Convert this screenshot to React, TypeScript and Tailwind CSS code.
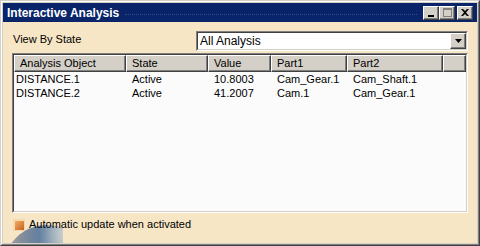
import React from "react";

const font = { fontFamily: '"Liberation Sans", Arial, sans-serif' };

function CapBtn({ children }: { children: React.ReactNode }) {
  return (
    <div className="w-[16px] h-[14px] bg-[#d4d0c8] border-t border-l border-t-white border-l-white border-r border-b border-r-[#404040] border-b-[#404040] flex items-center justify-center shadow-[inset_-1px_-1px_0_#808080]">
      {children}
    </div>
  );
}

const cols = [
  { label: "Analysis Object", w: "w-[112px]" },
  { label: "State", w: "w-[82px]" },
  { label: "Value", w: "w-[63px]" },
  { label: "Part1", w: "w-[76px]" },
  { label: "Part2", w: "w-[96px]" },
];

const rows = [
  ["DISTANCE.1", "Active", "10.8003", "Cam_Gear.1", "Cam_Shaft.1"],
  ["DISTANCE.2", "Active", "41.2007", "Cam.1", "Cam_Gear.1"],
];

export default function App() {
  return (
    <div
      className="relative w-[480px] h-[246px] bg-[#d4d0c8] border-t border-l border-t-[#d4d0c8] border-l-[#d4d0c8] border-r border-b border-r-[#404040] border-b-[#404040] overflow-hidden text-[11px] text-black"
      style={font}
    >
      <div className="w-full h-full border-t border-l border-t-white border-l-white border-r border-b border-r-[#808080] border-b-[#808080] flex flex-col">
        <div className="flex-1 flex flex-col p-px bg-[#d4d0c8]">
          {/* title bar */}
          <div className="h-[19px] bg-[#0a246a] flex items-center pl-[4px] pr-[4px]">
            <span className="text-white font-bold text-[12px] leading-none">Interactive Analysis</span>
            <div className="flex-1 mx-[6px] h-0 border-b border-dotted border-[#2f4f8c] mt-[4px]" />
            <div className="flex items-center">
              <CapBtn>
                <div className="w-[6px] h-[2px] bg-black mt-[6px] -ml-[1px]" />
              </CapBtn>
              <CapBtn>
                <div className="w-[9px] h-[9px] border border-[#808080] border-t-2" />
              </CapBtn>
              <div className="w-[2px]" />
              <CapBtn>
                <svg width="8" height="7" viewBox="0 0 8 7">
                  <path d="M0 0h2l2 2 2-2h2L5 3.5 8 7H6L4 5 2 7H0l3-3.5z" fill="#000" />
                </svg>
              </CapBtn>
            </div>
          </div>

          {/* body */}
          <div className="relative flex-1 bg-[#f7e6c6] flex flex-col px-[9px] pt-[9px] overflow-hidden">
            <svg className="absolute left-0 bottom-0" width="60" height="22" viewBox="0 0 60 22">
              <defs>
                <radialGradient id="g" cx="0.75" cy="0.1" r="0.8">
                  <stop offset="0" stopColor="#b8cde0" />
                  <stop offset="0.35" stopColor="#5d7fa6" />
                  <stop offset="1" stopColor="#1c3358" />
                </radialGradient>
                <linearGradient id="f" x1="0" y1="0" x2="1" y2="0">
                  <stop offset="0" stopColor="#fff" stopOpacity="0.35" />
                  <stop offset="0.6" stopColor="#fff" stopOpacity="1" />
                  <stop offset="1" stopColor="#fff" stopOpacity="0.6" />
                </linearGradient>
                <mask id="m">
                  <rect width="60" height="22" fill="url(#f)" />
                </mask>
              </defs>
              <circle cx="44" cy="48" r="44" fill="url(#g)" mask="url(#m)" opacity="0.9" />
            </svg>

            <div className="flex items-center h-[19px]">
              <span className="pl-[1px] -mt-[3px]">View By State</span>
              <div className="ml-auto w-[272px] h-[20px] bg-white border-t border-l border-t-[#808080] border-l-[#808080] border-r border-b border-r-white border-b-white">
                <div className="w-full h-full border-t border-l border-t-[#404040] border-l-[#404040] border-r border-b border-r-[#d4d0c8] border-b-[#d4d0c8] flex items-center">
                  <span className="pl-[2px] text-[12px]">All Analysis</span>
                  <div className="ml-auto h-[16px] w-[16px] bg-[#d4d0c8] border-t border-l border-t-white border-l-white border-r border-b border-r-[#404040] border-b-[#404040] flex items-center justify-center shadow-[inset_-1px_-1px_0_#808080]">
                    <svg width="7" height="4" viewBox="0 0 7 4">
                      <path d="M0 0h7L3.5 4z" fill="#000" />
                    </svg>
                  </div>
                </div>
              </div>
            </div>

            {/* list */}
            <div className="relative mt-[3px] h-[160px] bg-[#fbfbfb] border-t border-l border-t-[#808080] border-l-[#808080] border-r border-b border-r-white border-b-white">
              <div className="w-full h-full border-t border-l border-t-[#404040] border-l-[#404040] border-r border-b border-r-[#d4d0c8] border-b-[#d4d0c8] flex flex-col">
                <div className="flex h-[17px]">
                  {cols.map((c) => (
                    <div
                      key={c.label}
                      className={`${c.w} h-full bg-[#d4d0c8] border-t border-l border-t-white border-l-white border-r border-b border-r-[#404040] border-b-[#404040] shadow-[inset_-1px_-1px_0_#808080] flex items-center pl-[5px]`}
                    >
                      {c.label}
                    </div>
                  ))}
                  <div className="flex-1 h-full bg-[#d4d0c8] border-t border-l border-t-white border-l-white border-r border-b border-r-[#404040] border-b-[#404040] shadow-[inset_-1px_-1px_0_#808080]" />
                </div>
                {rows.map((r, i) => (
                  <div key={i} className="flex h-[14px] items-center">
                    {r.map((cell, j) => (
                      <div key={j} className={`${cols[j].w} ${j === 0 ? "pl-[2px]" : "pl-[6px]"}`}>
                        {cell}
                      </div>
                    ))}
                  </div>
                ))}
              </div>
            </div>

            <div className="relative flex items-center mt-[5px] h-[13px]">
              <div className="w-[12px] h-[12px] ml-[1px] border border-[#f0d8b0] bg-gradient-to-br from-[#f6b56a] to-[#c8621a] shadow-[inset_1px_1px_0_#fbd9a8]" />
              <span className="ml-[4px]">Automatic update when activated</span>
            </div>
          </div>
        </div>
      </div>
    </div>
  );
}
